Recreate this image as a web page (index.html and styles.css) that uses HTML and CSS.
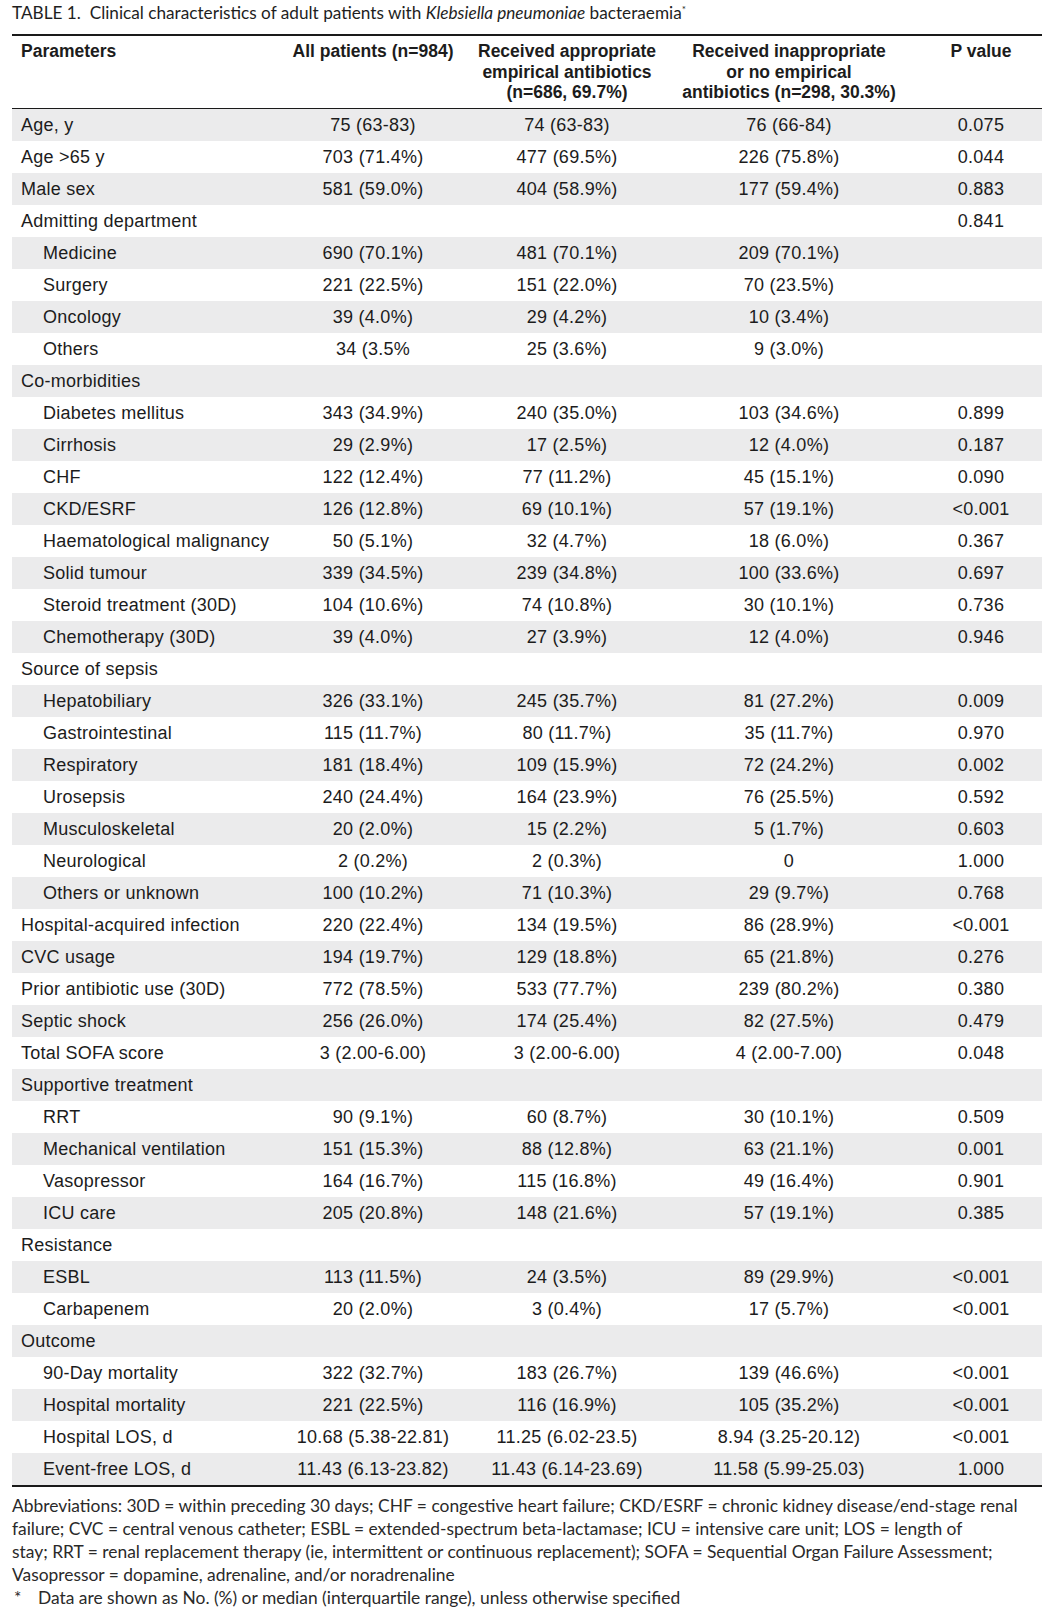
FILE: index.html
```html
<!DOCTYPE html>
<html lang="en">
<head>
<meta charset="utf-8">
<title>Table 1</title>
<link rel="stylesheet" href="styles.css">
</head>
<body>
<div class="page">
  <div class="caption">TABLE 1.&nbsp; Clinical characteristics of adult patients with <i>Klebsiella pneumoniae</i> bacteraemia<sup>*</sup></div>
  <div class="table">
    <div class="hrow">
      <div class="c1">Parameters</div>
      <div class="c">All patients (n=984)</div>
      <div class="c">Received appropriate<br>empirical antibiotics<br>(n=686, 69.7%)</div>
      <div class="c">Received inappropriate<br>or no empirical<br>antibiotics (n=298, 30.3%)</div>
      <div class="c">P value</div>
    </div>
    <div class="row"><div class="c1">Age, y</div><div class="c">75 (63-83)</div><div class="c">74 (63-83)</div><div class="c">76 (66-84)</div><div class="c">0.075</div></div>
    <div class="row"><div class="c1">Age &gt;65 y</div><div class="c">703 (71.4%)</div><div class="c">477 (69.5%)</div><div class="c">226 (75.8%)</div><div class="c">0.044</div></div>
    <div class="row"><div class="c1">Male sex</div><div class="c">581 (59.0%)</div><div class="c">404 (58.9%)</div><div class="c">177 (59.4%)</div><div class="c">0.883</div></div>
    <div class="row"><div class="c1">Admitting department</div><div class="c"></div><div class="c"></div><div class="c"></div><div class="c">0.841</div></div>
    <div class="row"><div class="c1 ind">Medicine</div><div class="c">690 (70.1%)</div><div class="c">481 (70.1%)</div><div class="c">209 (70.1%)</div><div class="c"></div></div>
    <div class="row"><div class="c1 ind">Surgery</div><div class="c">221 (22.5%)</div><div class="c">151 (22.0%)</div><div class="c">70 (23.5%)</div><div class="c"></div></div>
    <div class="row"><div class="c1 ind">Oncology</div><div class="c">39 (4.0%)</div><div class="c">29 (4.2%)</div><div class="c">10 (3.4%)</div><div class="c"></div></div>
    <div class="row"><div class="c1 ind">Others</div><div class="c">34 (3.5%</div><div class="c">25 (3.6%)</div><div class="c">9 (3.0%)</div><div class="c"></div></div>
    <div class="row"><div class="c1">Co-morbidities</div><div class="c"></div><div class="c"></div><div class="c"></div><div class="c"></div></div>
    <div class="row"><div class="c1 ind">Diabetes mellitus</div><div class="c">343 (34.9%)</div><div class="c">240 (35.0%)</div><div class="c">103 (34.6%)</div><div class="c">0.899</div></div>
    <div class="row"><div class="c1 ind">Cirrhosis</div><div class="c">29 (2.9%)</div><div class="c">17 (2.5%)</div><div class="c">12 (4.0%)</div><div class="c">0.187</div></div>
    <div class="row"><div class="c1 ind">CHF</div><div class="c">122 (12.4%)</div><div class="c">77 (11.2%)</div><div class="c">45 (15.1%)</div><div class="c">0.090</div></div>
    <div class="row"><div class="c1 ind">CKD/ESRF</div><div class="c">126 (12.8%)</div><div class="c">69 (10.1%)</div><div class="c">57 (19.1%)</div><div class="c">&lt;0.001</div></div>
    <div class="row"><div class="c1 ind">Haematological malignancy</div><div class="c">50 (5.1%)</div><div class="c">32 (4.7%)</div><div class="c">18 (6.0%)</div><div class="c">0.367</div></div>
    <div class="row"><div class="c1 ind">Solid tumour</div><div class="c">339 (34.5%)</div><div class="c">239 (34.8%)</div><div class="c">100 (33.6%)</div><div class="c">0.697</div></div>
    <div class="row"><div class="c1 ind">Steroid treatment (30D)</div><div class="c">104 (10.6%)</div><div class="c">74 (10.8%)</div><div class="c">30 (10.1%)</div><div class="c">0.736</div></div>
    <div class="row"><div class="c1 ind">Chemotherapy (30D)</div><div class="c">39 (4.0%)</div><div class="c">27 (3.9%)</div><div class="c">12 (4.0%)</div><div class="c">0.946</div></div>
    <div class="row"><div class="c1">Source of sepsis</div><div class="c"></div><div class="c"></div><div class="c"></div><div class="c"></div></div>
    <div class="row"><div class="c1 ind">Hepatobiliary</div><div class="c">326 (33.1%)</div><div class="c">245 (35.7%)</div><div class="c">81 (27.2%)</div><div class="c">0.009</div></div>
    <div class="row"><div class="c1 ind">Gastrointestinal</div><div class="c">115 (11.7%)</div><div class="c">80 (11.7%)</div><div class="c">35 (11.7%)</div><div class="c">0.970</div></div>
    <div class="row"><div class="c1 ind">Respiratory</div><div class="c">181 (18.4%)</div><div class="c">109 (15.9%)</div><div class="c">72 (24.2%)</div><div class="c">0.002</div></div>
    <div class="row"><div class="c1 ind">Urosepsis</div><div class="c">240 (24.4%)</div><div class="c">164 (23.9%)</div><div class="c">76 (25.5%)</div><div class="c">0.592</div></div>
    <div class="row"><div class="c1 ind">Musculoskeletal</div><div class="c">20 (2.0%)</div><div class="c">15 (2.2%)</div><div class="c">5 (1.7%)</div><div class="c">0.603</div></div>
    <div class="row"><div class="c1 ind">Neurological</div><div class="c">2 (0.2%)</div><div class="c">2 (0.3%)</div><div class="c">0</div><div class="c">1.000</div></div>
    <div class="row"><div class="c1 ind">Others or unknown</div><div class="c">100 (10.2%)</div><div class="c">71 (10.3%)</div><div class="c">29 (9.7%)</div><div class="c">0.768</div></div>
    <div class="row"><div class="c1">Hospital-acquired infection</div><div class="c">220 (22.4%)</div><div class="c">134 (19.5%)</div><div class="c">86 (28.9%)</div><div class="c">&lt;0.001</div></div>
    <div class="row"><div class="c1">CVC usage</div><div class="c">194 (19.7%)</div><div class="c">129 (18.8%)</div><div class="c">65 (21.8%)</div><div class="c">0.276</div></div>
    <div class="row"><div class="c1">Prior antibiotic use (30D)</div><div class="c">772 (78.5%)</div><div class="c">533 (77.7%)</div><div class="c">239 (80.2%)</div><div class="c">0.380</div></div>
    <div class="row"><div class="c1">Septic shock</div><div class="c">256 (26.0%)</div><div class="c">174 (25.4%)</div><div class="c">82 (27.5%)</div><div class="c">0.479</div></div>
    <div class="row"><div class="c1">Total SOFA score</div><div class="c">3 (2.00-6.00)</div><div class="c">3 (2.00-6.00)</div><div class="c">4 (2.00-7.00)</div><div class="c">0.048</div></div>
    <div class="row"><div class="c1">Supportive treatment</div><div class="c"></div><div class="c"></div><div class="c"></div><div class="c"></div></div>
    <div class="row"><div class="c1 ind">RRT</div><div class="c">90 (9.1%)</div><div class="c">60 (8.7%)</div><div class="c">30 (10.1%)</div><div class="c">0.509</div></div>
    <div class="row"><div class="c1 ind">Mechanical ventilation</div><div class="c">151 (15.3%)</div><div class="c">88 (12.8%)</div><div class="c">63 (21.1%)</div><div class="c">0.001</div></div>
    <div class="row"><div class="c1 ind">Vasopressor</div><div class="c">164 (16.7%)</div><div class="c">115 (16.8%)</div><div class="c">49 (16.4%)</div><div class="c">0.901</div></div>
    <div class="row"><div class="c1 ind">ICU care</div><div class="c">205 (20.8%)</div><div class="c">148 (21.6%)</div><div class="c">57 (19.1%)</div><div class="c">0.385</div></div>
    <div class="row"><div class="c1">Resistance</div><div class="c"></div><div class="c"></div><div class="c"></div><div class="c"></div></div>
    <div class="row"><div class="c1 ind">ESBL</div><div class="c">113 (11.5%)</div><div class="c">24 (3.5%)</div><div class="c">89 (29.9%)</div><div class="c">&lt;0.001</div></div>
    <div class="row"><div class="c1 ind">Carbapenem</div><div class="c">20 (2.0%)</div><div class="c">3 (0.4%)</div><div class="c">17 (5.7%)</div><div class="c">&lt;0.001</div></div>
    <div class="row"><div class="c1">Outcome</div><div class="c"></div><div class="c"></div><div class="c"></div><div class="c"></div></div>
    <div class="row"><div class="c1 ind">90-Day mortality</div><div class="c">322 (32.7%)</div><div class="c">183 (26.7%)</div><div class="c">139 (46.6%)</div><div class="c">&lt;0.001</div></div>
    <div class="row"><div class="c1 ind">Hospital mortality</div><div class="c">221 (22.5%)</div><div class="c">116 (16.9%)</div><div class="c">105 (35.2%)</div><div class="c">&lt;0.001</div></div>
    <div class="row"><div class="c1 ind">Hospital LOS, d</div><div class="c">10.68 (5.38-22.81)</div><div class="c">11.25 (6.02-23.5)</div><div class="c">8.94 (3.25-20.12)</div><div class="c">&lt;0.001</div></div>
    <div class="row"><div class="c1 ind">Event-free LOS, d</div><div class="c">11.43 (6.13-23.82)</div><div class="c">11.43 (6.14-23.69)</div><div class="c">11.58 (5.99-25.03)</div><div class="c">1.000</div></div>
  </div>
  <div class="notes">
    <div class="nl">Abbreviations: 30D = within preceding 30 days; CHF = congestive heart failure; CKD/ESRF = chronic kidney disease/end-stage renal</div>
    <div class="nl">failure; CVC = central venous catheter; ESBL = extended-spectrum beta-lactamase; ICU = intensive care unit; LOS = length of</div>
    <div class="nl">stay; RRT = renal replacement therapy (ie, intermittent or continuous replacement); SOFA = Sequential Organ Failure Assessment;</div>
    <div class="nl">Vasopressor = dopamine, adrenaline, and/or noradrenaline</div>
    <div class="nl star"><span class="ast">*</span><span>Data are shown as No. (%) or median (interquartile range), unless otherwise specified</span></div>
  </div>
</div>
</body>
</html>
```

FILE: styles.css
```css
html, body {
  margin: 0;
  padding: 0;
  background: #ffffff;
}

.page {
  width: 1062px;
  padding: 0 0 0 12px;
  box-sizing: border-box;
}

.caption {
  font-family: "Lato", "Liberation Sans", sans-serif;
  font-size: 17.2px;
  color: #1e1e1e;
  height: 34px;
  line-height: 26px;
  white-space: nowrap;
}

.caption sup {
  font-size: 10px;
  vertical-align: 6px;
  line-height: 0;
}

.table {
  width: 1030px;
  border-top: 2px solid #1a1a1a;
  border-bottom: 2px solid #1a1a1a;
  font-family: "Liberation Sans", Arial, sans-serif;
  font-size: 18px;
  letter-spacing: 0.25px;
  color: #1c1c1c;
}

.hrow, .row {
  display: grid;
  grid-template-columns: 258px 206px 182px 262px 122px;
}

.hrow {
  font-size: 17.5px;
  letter-spacing: 0;
  font-weight: bold;
  line-height: 20.5px;
  padding: 5px 0 6px;
  border-bottom: 1.5px solid #1a1a1a;
  height: 61px;
}

.row {
  height: 32px;
  align-items: center;
}

.row:nth-child(even) {
  background: #ebebec;
}

.c1 {
  padding-left: 9px;
  white-space: nowrap;
}

.c1.ind {
  padding-left: 31px;
}

.c {
  text-align: center;
  white-space: nowrap;
}

.notes {
  font-family: "Lato", "Liberation Sans", sans-serif;
  font-size: 17.4px;
  color: #2a2a2a;
  line-height: 23px;
  padding-top: 7px;
}

.nl {
  white-space: nowrap;
}

.star {
  display: flex;
}

.ast {
  width: 24px;
  padding-left: 2px;
}
```
